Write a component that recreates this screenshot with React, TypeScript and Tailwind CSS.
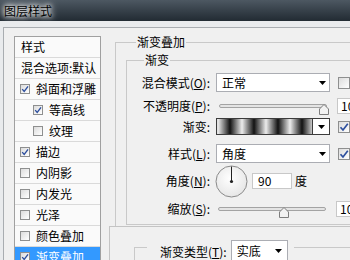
import type { ReactNode } from "react";

const items: { label: string; check?: boolean; on?: boolean; indent?: boolean; active?: boolean }[] = [
  { label: "样式" },
  { label: "混合选项:默认" },
  { label: "斜面和浮雕", check: true, on: true },
  { label: "等高线", check: true, on: true, indent: true },
  { label: "纹理", check: true, indent: true },
  { label: "描边", check: true, on: true },
  { label: "内阴影", check: true },
  { label: "内发光", check: true },
  { label: "光泽", check: true },
  { label: "颜色叠加", check: true },
  { label: "渐变叠加", check: true, on: true, active: true },
];

function Box({ on, big }: { on?: boolean; big?: boolean }) {
  return (
    <span
      className={`shrink-0 flex items-center justify-center border border-[#8e8f8f] bg-gradient-to-br from-[#dcdcdc] to-[#ffffff] ${
        big ? "w-[12px] h-[12px]" : "w-[10px] h-[10px]"
      }`}
    >
      {on && (
        <svg width={big ? 10 : 8} height={big ? 10 : 8} viewBox="0 0 10 10">
          <path d="M1.5 5.2 L4 8 L8.8 1.8" fill="none" stroke="#2d4f9e" strokeWidth="1.7" />
        </svg>
      )}
    </span>
  );
}

function Arrow() {
  return (
    <svg width="7" height="4" viewBox="0 0 7 4" className="shrink-0">
      <polygon points="0,0 7,0 3.5,4" fill="#000" />
    </svg>
  );
}

function Label({ children }: { children: ReactNode }) {
  return <span className="w-[83px] shrink-0 text-right whitespace-nowrap">{children}</span>;
}

function Select({ text }: { text: string }) {
  return (
    <div className="ml-[6px] w-[114px] h-[19px] shrink-0 bg-white border border-[#abadb3] flex items-center justify-between pl-[5px] pr-[3px]">
      <span>{text}</span>
      <Arrow />
    </div>
  );
}

function Slider({ pos, left }: { pos: number; left: string }) {
  return (
    <div className={`${left} relative w-[108px] h-[4px] shrink-0 rounded-full border border-[#a3a3a3] bg-[#e4e4e4]`}>
      <svg
        width="10"
        height="11"
        viewBox="0 0 10 11"
        className="absolute top-[-1px]"
        style={{ left: pos }}
      >
        <path d="M5 0.5 L9.5 5 V10.5 H0.5 V5 Z" fill="#f2f2f2" stroke="#7d7d7d" strokeLinejoin="round" />
      </svg>
    </div>
  );
}

function ValueBox() {
  return (
    <div className="ml-[10px] w-[30px] h-[16px] shrink-0 bg-white border border-[#c8c8c8] flex items-center pl-[3px]">
      100
    </div>
  );
}

export default function App() {
  return (
    <div className="w-[350px] h-[260px] overflow-hidden bg-[#e9ebed] flex flex-col text-[12px] leading-[14px] text-black font-['Noto_Sans_CJK_SC','Microsoft_YaHei',sans-serif]">
      {/* title bar */}
      <div className="h-[21px] shrink-0 bg-gradient-to-b from-[#4d5862] to-[#222b33] flex items-center pl-[4px]">
        <span className="[text-shadow:0_0_4px_#fff,0_0_7px_#fff,0_0_10px_rgba(255,255,255,0.8)]">图层样式</span>
      </div>

      <div className="flex-1 pt-[6px] pl-[3px] min-h-0">
        <div className="h-full bg-[#f0f0f0] border-l border-t border-[#a9adb1] flex">
          {/* left list */}
          <div className="pl-[10px] pt-[8px] shrink-0">
            <div className="w-[87px] h-[300px] bg-[#fafafa] border border-[#a0a0a0]">
              {items.map((it) => (
                <div
                  key={it.label}
                  className={`h-[21px] flex items-center gap-[6px] border-b border-[#dadada] whitespace-nowrap ${
                    it.active ? "bg-[#3399ff] text-white" : ""
                  } ${it.check ? (it.indent ? "pl-[18px]" : "pl-[5px]") : "pl-[6px]"}`}
                >
                  {it.check && <Box on={it.on} />}
                  <span>{it.label}</span>
                </div>
              ))}
            </div>
          </div>

          {/* right panel */}
          <div className="ml-[14px] pt-[7px] shrink-0 relative">
            <fieldset className="w-[260px] h-[260px] border border-[#c9c9c9]">
              <legend className="ml-[20px] px-[1px] leading-[14px]">渐变叠加</legend>
              <fieldset className="ml-[10px] mt-[4px] w-[240px] border border-[#c9c9c9] pb-[8px]">
                <legend className="ml-[17px] px-[1px] leading-[14px]">渐变</legend>

                <div className="flex items-center h-[19px] mt-[6px]">
                  <Label>
                    混合模式(<u>O</u>):
                  </Label>
                  <Select text="正常" />
                  <span className="ml-[8px]">
                    <Box big />
                  </span>
                </div>

                <div className="flex items-center h-[14px] mt-[7px]">
                  <Label>
                    不透明度(<u>P</u>):
                  </Label>
                  <Slider pos={99} left="ml-[9px]" />
                  <ValueBox />
                </div>

                <div className="flex items-center h-[17px] mt-[5px]">
                  <Label>渐变:</Label>
                  <div className="ml-[6px] w-[114px] h-[17px] shrink-0 flex border border-[#3c3c3c] bg-white">
                    <div className="w-[96px] h-full border-r border-[#3c3c3c] bg-[repeating-linear-gradient(90deg,#ececec_1px,#121212_13px,#ececec_25px)]" />
                    <div className="flex-1 flex items-center justify-center">
                      <Arrow />
                    </div>
                  </div>
                  <span className="ml-[8px]">
                    <Box big on />
                  </span>
                </div>

                <div className="flex items-center h-[19px] mt-[9px]">
                  <Label>
                    样式(<u>L</u>):
                  </Label>
                  <Select text="角度" />
                  <span className="ml-[8px]">
                    <Box big on />
                  </span>
                </div>

                <div className="flex items-center h-[32px] mt-[2px]">
                  <Label>
                    角度(<u>N</u>):
                  </Label>
                  <svg width="33" height="33" viewBox="0 0 33 33" className="ml-[5px] shrink-0">
                    <defs>
                      <radialGradient id="dial" cx="0.45" cy="0.4" r="0.7">
                        <stop offset="0" stopColor="#ffffff" />
                        <stop offset="1" stopColor="#e2e2e2" />
                      </radialGradient>
                    </defs>
                    <circle cx="16.5" cy="16.5" r="15.5" fill="url(#dial)" stroke="#8a8a8a" />
                    <line x1="16.5" y1="16.5" x2="16.5" y2="1.5" stroke="#222" strokeWidth="1" />
                    <circle cx="16.5" cy="16.5" r="1.6" fill="#222" />
                  </svg>
                  <div className="ml-[4px] w-[40px] h-[16px] shrink-0 bg-white border border-[#c8c8c8] flex items-center pl-[5px]">
                    90
                  </div>
                  <span className="ml-[3px]">度</span>
                </div>

                <div className="flex items-center h-[14px] mt-[5px]">
                  <Label>
                    缩放(<u>S</u>):
                  </Label>
                  <Slider pos={60} left="ml-[8px]" />
                  <ValueBox />
                </div>
              </fieldset>
            </fieldset>

            {/* gradient editor window lying over the lower part */}
            <div className="absolute left-[-6px] top-[198px] w-[260px] h-[60px] bg-[#f0f0f0] border-t border-l border-[#c4c4c4] pt-[13px] pl-[24px]">
              <div className="flex items-start h-[24px]">
                <div className="w-[13px] h-[20px] mt-[7px] shrink-0 border-l border-t border-[#c9c9c9]" />
                <span className="ml-[13px] mt-[5px] whitespace-nowrap">
                  渐变类型(<u>T</u>):
                </span>
                <div className="ml-[4px] w-[57px] h-[21px] shrink-0 bg-white border border-[#abadb3] flex items-center justify-between pl-[5px] pr-[5px]">
                  <span>实底</span>
                  <Arrow />
                </div>
                <div className="ml-[6px] mt-[7px] flex-1 h-px bg-[#c9c9c9]" />
              </div>
            </div>
          </div>
        </div>
      </div>
    </div>
  );
}
